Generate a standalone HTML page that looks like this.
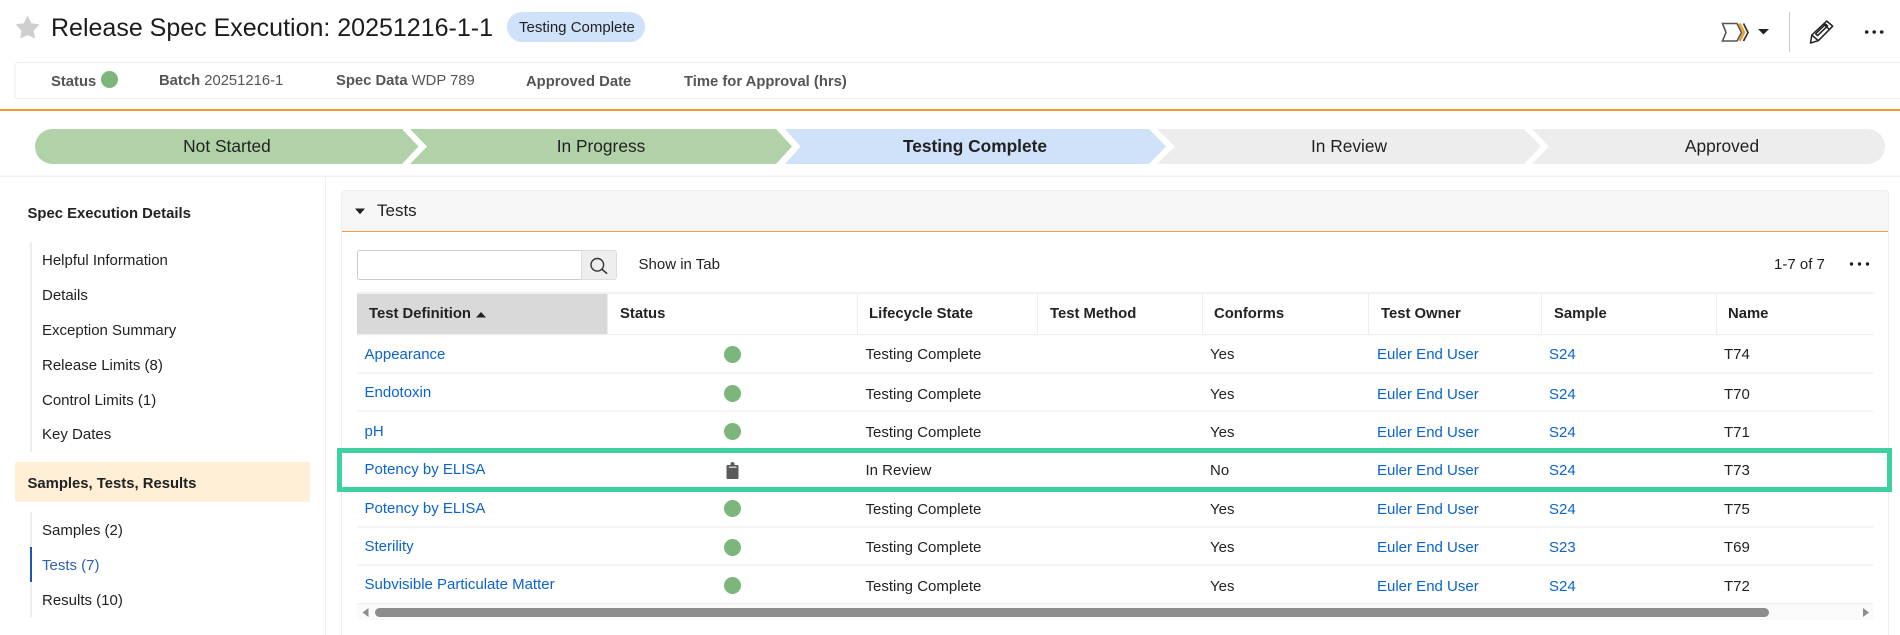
<!DOCTYPE html>
<html lang="en"><head><meta charset="utf-8"><title>Release Spec Execution</title>
<style>
html,body{margin:0;padding:0;background:#fff;width:1900px;height:635px;overflow:hidden}
body{position:relative;font-family:"Liberation Sans",sans-serif;font-size:15px;color:#222}
.t{position:absolute;white-space:nowrap;line-height:20px}
.b{font-weight:700}
.l{color:#0b63ce}
.g{color:#555;font-size:14.800px}
.h{font-weight:700;font-size:14.850px;color:#222}
.c{font-size:17.33px;text-align:center;color:#222}
svg.bg{position:absolute;left:0;top:0}
</style></head><body>
<svg class="bg" width="1900" height="635" viewBox="0 0 1900 635">
<!-- star -->
<path d="M27.600 16.800L31 23.800 38.500 24.800 33.100 30.300 34.300 37.700 27.600 34.300 20.900 37.700 22.100 30.300 16.700 24.800 24.200 23.800z" fill="#cfcfcf" stroke="#cfcfcf" stroke-width="1.200" stroke-linejoin="round"/>
<!-- badge -->
<rect x="507" y="12" width="138" height="30" rx="15" fill="#d0e1fa"/>
<!-- info bar -->
<path d="M1900 62.500H18a3 3 0 0 0-3 3V95.500a3 3 0 0 0 3 3H1900" fill="#fff" stroke="#eee" stroke-width="1.200"/>
<circle cx="109.500" cy="79.500" r="8.500" fill="#7cb67c"/>
<rect x="0" y="109" width="1900" height="2" fill="#f59a2e"/>
<!-- stages -->
<path d="M52.500 129H402l16.500 17.500L402 164H52.500a17.500 17.500 0 0 1 0-35z" fill="#b1d2a9"/>
<path d="M410 129H776l16 17.500L776 164H410l17-17.500z" fill="#b1d2a9"/>
<path d="M785 129H1149l17 17.500L1149 164H785l15.500-17.500z" fill="#d0e1fa"/>
<path d="M1157 129H1524l17 17.500L1524 164H1157l18-17.500z" fill="#ededed"/>
<path d="M1532 129H1867.500a17.500 17.500 0 0 1 0 35H1532l17-17.500z" fill="#ededed"/>
<!-- dividers -->
<rect x="0" y="175.500" width="1900" height="1.200" fill="#eee"/>
<rect x="325" y="176" width="1" height="459" fill="#eee"/>
<!-- sidebar rails -->
<rect x="30" y="242" width="2" height="210" fill="#eee"/>
<rect x="30" y="512" width="2" height="105" fill="#eee"/>
<rect x="30" y="547" width="2" height="35" fill="#1d56b0"/>
<rect x="15" y="462" width="295" height="40" rx="2" fill="#feefd6"/>
<!-- panel -->
<path d="M341.500 635V194a3.500 3.500 0 0 1 3.500-3.500H1885a3.500 3.500 0 0 1 3.500 3.500V635" fill="#fff" stroke="#eee"/>
<path d="M342 232V194a3 3 0 0 1 3-3H1885a3 3 0 0 1 3 3V232z" fill="#f7f7f7"/>
<rect x="342" y="231" width="1546" height="1" fill="#ee9b3f"/>
<path d="M355 208.500h10l-5 5.800z" fill="#222"/>
<!-- search -->
<rect x="357.500" y="250.500" width="224" height="29" rx="2" fill="#fff" stroke="#ccc"/>
<path d="M581.500 250.500H614a2.500 2.500 0 0 1 2.500 2.500V277a2.500 2.500 0 0 1-2.500 2.500H581.500z" fill="#eee" stroke="#ddd"/>
<circle cx="597.300" cy="264.800" r="6.300" fill="none" stroke="#333" stroke-width="1.400"/>
<path d="M601.900 269.200l5.200 4.500" stroke="#333" stroke-width="1.600" fill="none"/>
<!-- list dots -->
<circle cx="1851.500" cy="264" r="1.700" fill="#222"/><circle cx="1859.500" cy="264" r="1.700" fill="#222"/><circle cx="1867.500" cy="264" r="1.700" fill="#222"/>
<!-- table -->
<rect x="357" y="292" width="1516.500" height="2" fill="#f2f2f2"/>
<rect x="357" y="294" width="250" height="40" fill="#d9d9d9"/>
<g fill="#eee">
<rect x="607" y="294" width="1" height="40"/><rect x="857" y="294" width="1" height="40"/><rect x="1037" y="294" width="1" height="40"/><rect x="1202" y="294" width="1" height="40"/><rect x="1368" y="294" width="1" height="40"/><rect x="1541" y="294" width="1" height="40"/><rect x="1716" y="294" width="1" height="40"/>
<rect x="357" y="334" width="1516.500" height="1.200"/>
<rect x="357" y="372.500" width="1516.500" height="1.200"/>
<rect x="357" y="410.500" width="1516.500" height="1.200"/>
<rect x="357" y="526.500" width="1516.500" height="1.200"/>
<rect x="357" y="564.500" width="1516.500" height="1.200"/>
<rect x="357" y="603" width="1516.500" height="1.200"/>
</g>
<path d="M476 317.500l5-5.500 5 5.500z" fill="#222"/>
<!-- status circles -->
<g fill="#7cb67c">
<circle cx="732.500" cy="354.500" r="8.500"/><circle cx="732.500" cy="393.500" r="8.500"/><circle cx="732.500" cy="431.500" r="8.500"/><circle cx="732.500" cy="508.500" r="8.500"/><circle cx="732.500" cy="547.500" r="8.500"/><circle cx="732.500" cy="585.500" r="8.500"/>
</g>
<!-- clipboard -->
<path d="M727.500 465H730.500V464.500a2 2 0 0 1 2-2.500 2 2 0 0 1 2 2.500V465h3a1 1 0 0 1 1 1V478a1 1 0 0 1-1 1H727.500a1 1 0 0 1-1-1V466a1 1 0 0 1 1-1z" fill="#5a5a5a"/>
<rect x="729" y="466.500" width="7.500" height="1.500" fill="#ccc"/>
<!-- green highlight -->
<rect x="339.500" y="450.500" width="1550" height="39" fill="none" stroke="#3fd09f" stroke-width="5"/>
<!-- scrollbar -->
<rect x="357" y="604.500" width="1516.500" height="15.500" fill="#fafafa"/>
<rect x="375" y="608" width="1394" height="9" rx="4.500" fill="#8c8c8c"/>
<path d="M368.500 608v9l-6-4.500z" fill="#8c8c8c"/>
<path d="M1863 608v9l6-4.500z" fill="#8c8c8c"/>
<!-- right icons -->
<path d="M1722.500 23.500H1737l4.500 9-4.500 8.500H1722.500l3.500-8.500z" fill="none" stroke="#555" stroke-width="1.600"/>
<path d="M1739.500 23.500l4.500 9-4.500 8.500" fill="none" stroke="#f39a1f" stroke-width="2.400"/>
<path d="M1743.500 23.500l4.500 9-4.500 8.500" fill="none" stroke="#333" stroke-width="1.700"/>
<path d="M1758 29h11l-5.500 5.500z" fill="#222"/>
<rect x="1789" y="12" width="1" height="40" fill="#ccc"/>
<g fill="none" stroke="#222" stroke-width="1.500" stroke-linejoin="round">
<path d="M1810.500 43l1.300-8 14.900-14 6 5.200-14.400 14.500z"/>
<path d="M1811.800 35l6.500 5.700M1823.300 24l6 5.300M1815.600 33.800l10-9.700 2 1.800-10 9.700z"/>
</g>
<circle cx="1866.700" cy="32" r="1.800" fill="#222"/><circle cx="1874.200" cy="32" r="1.800" fill="#222"/><circle cx="1881.700" cy="32" r="1.800" fill="#222"/>
</svg>

<div class="t" style="left:51px;top:14px;font-size:25px;line-height:28px;color:#1c1c1c">Release Spec Execution: 20251216-1-1</div>
<div class="t" style="left:519px;top:18px;color:#222">Testing Complete</div>

<div class="t b g" style="left:51px;top:72px">Status</div>
<div class="t g" style="left:159px;top:71px"><b>Batch</b> 20251216-1</div>
<div class="t g" style="left:336px;top:71px"><b>Spec Data</b> WDP 789</div>
<div class="t b g" style="left:526px;top:72px">Approved Date</div>
<div class="t b g" style="left:684px;top:72px">Time for Approval (hrs)</div>

<div class="t c" style="left:127px;top:136px;width:200px">Not Started</div>
<div class="t c" style="left:501px;top:136px;width:200px">In Progress</div>
<div class="t c b" style="left:875px;top:136px;width:200px">Testing Complete</div>
<div class="t c" style="left:1249px;top:136px;width:200px">In Review</div>
<div class="t c" style="left:1622px;top:136px;width:200px">Approved</div>

<div class="t b h" style="left:27.500px;top:204px">Spec Execution Details</div>
<div class="t" style="left:42px;top:251px">Helpful Information</div>
<div class="t" style="left:42px;top:286px">Details</div>
<div class="t" style="left:42px;top:321px">Exception Summary</div>
<div class="t" style="left:42px;top:356px">Release Limits (8)</div>
<div class="t" style="left:42px;top:391px">Control Limits (1)</div>
<div class="t" style="left:42px;top:425px">Key Dates</div>
<div class="t b h" style="left:27.500px;top:474px">Samples, Tests, Results</div>
<div class="t" style="left:42px;top:521px">Samples (2)</div>
<div class="t" style="left:42px;top:556px;color:#2f5fb3">Tests (7)</div>
<div class="t" style="left:42px;top:591px">Results (10)</div>

<div class="t" style="left:377px;top:201px;font-size:17px">Tests</div>
<div class="t" style="left:638.500px;top:255px">Show in Tab</div>
<div class="t" style="left:1774px;top:255px">1-7 of 7</div>

<div class="t h" style="left:369px;top:304px">Test Definition</div>
<div class="t h" style="left:620px;top:304px">Status</div>
<div class="t h" style="left:869px;top:304px">Lifecycle State</div>
<div class="t h" style="left:1050px;top:304px">Test Method</div>
<div class="t h" style="left:1214px;top:304px">Conforms</div>
<div class="t h" style="left:1381px;top:304px">Test Owner</div>
<div class="t h" style="left:1554px;top:304px">Sample</div>
<div class="t h" style="left:1728px;top:304px">Name</div>

<div class="t l" style="left:364.500px;top:345px">Appearance</div>
<div class="t" style="left:865.500px;top:345px">Testing Complete</div><div class="t" style="left:1210px;top:345px">Yes</div><div class="t l" style="left:1377px;top:345px">Euler End User</div><div class="t l" style="left:1549px;top:345px">S24</div><div class="t" style="left:1724px;top:345px">T74</div>

<div class="t l" style="left:364.500px;top:383px">Endotoxin</div>
<div class="t" style="left:865.500px;top:385px">Testing Complete</div><div class="t" style="left:1210px;top:385px">Yes</div><div class="t l" style="left:1377px;top:385px">Euler End User</div><div class="t l" style="left:1549px;top:385px">S24</div><div class="t" style="left:1724px;top:385px">T70</div>

<div class="t l" style="left:364.500px;top:422px">pH</div>
<div class="t" style="left:865.500px;top:423px">Testing Complete</div><div class="t" style="left:1210px;top:423px">Yes</div><div class="t l" style="left:1377px;top:423px">Euler End User</div><div class="t l" style="left:1549px;top:423px">S24</div><div class="t" style="left:1724px;top:423px">T71</div>

<div class="t l" style="left:364.500px;top:460px">Potency by ELISA</div>
<div class="t" style="left:865.500px;top:461px">In Review</div><div class="t" style="left:1210px;top:461px">No</div><div class="t l" style="left:1377px;top:461px">Euler End User</div><div class="t l" style="left:1549px;top:461px">S24</div><div class="t" style="left:1724px;top:461px">T73</div>

<div class="t l" style="left:364.500px;top:499px">Potency by ELISA</div>
<div class="t" style="left:865.500px;top:500px">Testing Complete</div><div class="t" style="left:1210px;top:500px">Yes</div><div class="t l" style="left:1377px;top:500px">Euler End User</div><div class="t l" style="left:1549px;top:500px">S24</div><div class="t" style="left:1724px;top:500px">T75</div>

<div class="t l" style="left:364.500px;top:537px">Sterility</div>
<div class="t" style="left:865.500px;top:538px">Testing Complete</div><div class="t" style="left:1210px;top:538px">Yes</div><div class="t l" style="left:1377px;top:538px">Euler End User</div><div class="t l" style="left:1549px;top:538px">S23</div><div class="t" style="left:1724px;top:538px">T69</div>

<div class="t l" style="left:364.500px;top:575px">Subvisible Particulate Matter</div>
<div class="t" style="left:865.500px;top:577px">Testing Complete</div><div class="t" style="left:1210px;top:577px">Yes</div><div class="t l" style="left:1377px;top:577px">Euler End User</div><div class="t l" style="left:1549px;top:577px">S24</div><div class="t" style="left:1724px;top:577px">T72</div>
</body></html>
